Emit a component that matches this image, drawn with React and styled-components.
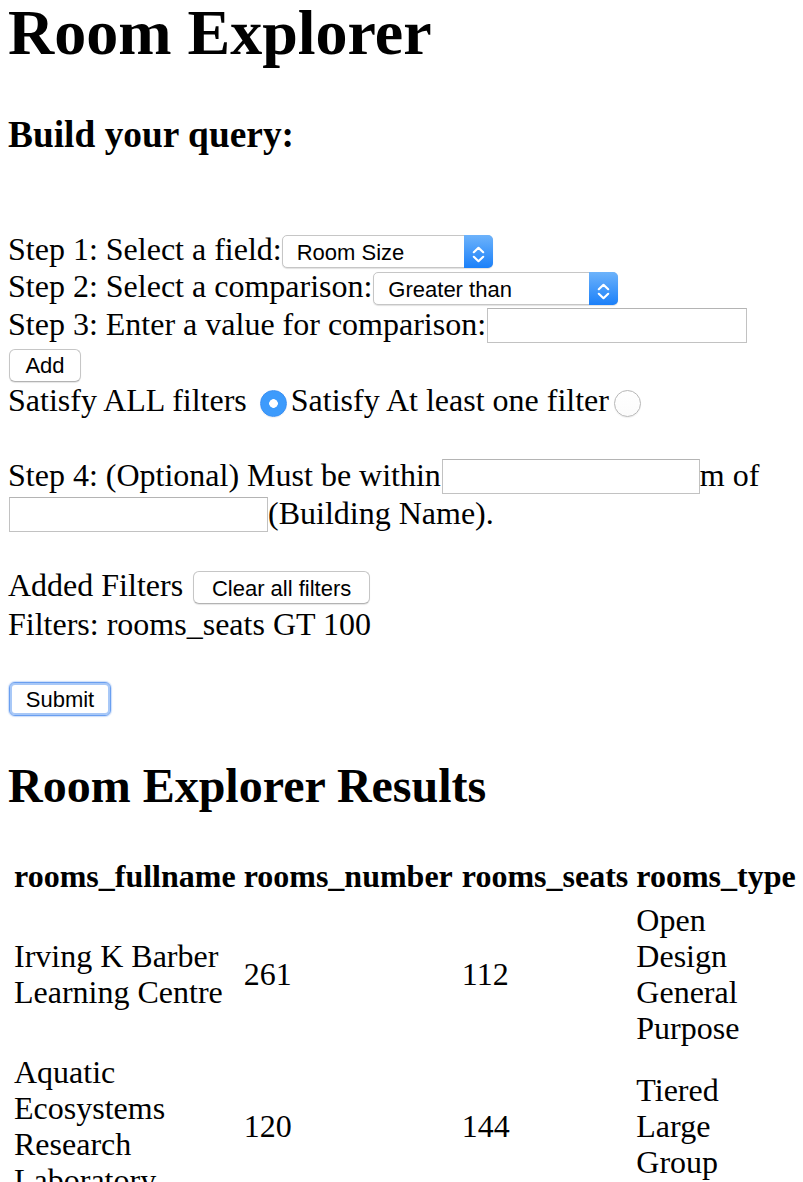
import React from "react";
import styled, { createGlobalStyle } from "styled-components";

const GlobalStyle = createGlobalStyle`
  html { overflow: hidden; }
  body {
    margin: 0;
    background: #ffffff;
    color: #000000;
    font-family: "Liberation Serif", "Times New Roman", Times, serif;
  }
`;

const Page = styled.div`
  padding: 1px 8px 0;
  font-size: 32px;
`;

const Title = styled.h1`
  margin: 0;
  font-size: 64px;
  line-height: 64px;
  font-weight: bold;
`;

const SubTitle = styled.h3`
  margin: 47.6px 0 0;
  font-size: 37.4px;
  line-height: 43px;
  font-weight: bold;
`;

const Form = styled.form`
  display: flex;
  flex-direction: column;
  margin-top: 74.6px;
`;

const Line = styled.div`
  display: flex;
  align-items: flex-end;
  height: ${(p) => p.$h ?? 37.5}px;
  margin-top: ${(p) => p.$gap ?? 0}px;
`;

const Text = styled.span`
  line-height: 37px;
  white-space: pre;
`;

const SelectWrap = styled.span`
  position: relative;
  display: flex;
  flex-shrink: 0;
  width: ${(p) => p.$w}px;
  height: 33px;
  margin-left: ${(p) => p.$ml ?? 1}px;
`;

const NativeSelect = styled.select`
  appearance: none;
  -webkit-appearance: none;
  display: block;
  box-sizing: border-box;
  width: 100%;
  height: 100%;
  margin: 0;
  padding: 2px 34px 0 14px;
  border: 1px solid #c6c6c6;
  border-radius: 5px;
  background: #ffffff;
  box-shadow: 0 1px 1px rgba(0, 0, 0, 0.12);
  font-family: "Liberation Sans", Arial, sans-serif;
  font-size: 22px;
  color: #000;
  outline: none;
`;

const Stepper = styled.span`
  position: absolute;
  top: 0;
  right: 0;
  bottom: 0;
  width: 29px;
  border-radius: 0 5px 5px 0;
  background: linear-gradient(#6db3fb, #1b80f9);
  pointer-events: none;
  display: flex;
`;

const TextInput = styled.input`
  box-sizing: border-box;
  flex-shrink: 0;
  width: ${(p) => p.$w ?? 259}px;
  height: 35px;
  margin: 0 0 0 1px;
  padding: 0 4px;
  border: 1px solid #c2c2c2;
  border-top-color: #b4b4b4;
  border-radius: 0;
  background: #fff;
  font-family: "Liberation Sans", Arial, sans-serif;
  font-size: 22px;
  outline: none;
`;

const Button = styled.button`
  box-sizing: border-box;
  flex-shrink: 0;
  width: ${(p) => p.$w}px;
  height: ${(p) => (p.$focused ? 34 : 33)}px;
  margin: 0 0 0 ${(p) => p.$ml ?? 1}px;
  padding: 2px 0 0;
  border: 1px solid ${(p) => (p.$focused ? "#6a9ff0" : "#c6c6c6")};
  border-bottom-color: ${(p) => (p.$focused ? "#6a9ff0" : "#b3b3b3")};
  border-radius: 6px;
  background: #ffffff;
  box-shadow: ${(p) =>
    p.$focused
      ? "inset 0 0 0 2px #a8c8f7, 0 0 1px 1px rgba(110,160,240,0.35)"
      : "0 1px 1px rgba(0, 0, 0, 0.1)"};
  font-family: "Liberation Sans", Arial, sans-serif;
  font-size: 22px;
  color: #000;
  cursor: pointer;
`;

const Radio = styled.input.attrs({ type: "radio" })`
  appearance: none;
  -webkit-appearance: none;
  box-sizing: border-box;
  flex-shrink: 0;
  width: 27px;
  height: 27px;
  margin: 0 4px 2.5px 5px;
  border-radius: 50%;
  border: 1px solid #b7b7b7;
  background: linear-gradient(#ffffff, #fbfbfb);
  box-shadow: 0 1px 1px rgba(0, 0, 0, 0.06);
  outline: none;

  &:checked {
    border-color: #3a8ff2;
    background: radial-gradient(circle at center, #ffffff 0 4px, #3d9bfc 4.6px);
  }
`;

const ResultsTitle = styled.h2`
  margin: 41.9px 0 0;
  font-size: 48px;
  line-height: 55.2px;
  font-weight: bold;
`;

const Table = styled.table`
  margin-top: 39.1px;
  width: min-content;
  border-spacing: 4px;
  font-size: 32px;
  line-height: 36px;
`;

const Th = styled.th`
  padding: 2px ${(p) => (p.$wide ? 3 : 2)}px 2px 2px;
  font-weight: bold;
  white-space: nowrap;
  text-align: left;
`;

const Td = styled.td`
  padding: 2px;
  vertical-align: middle;
  text-align: left;
`;

function Chevrons() {
  return (
    <svg width="29" height="33" viewBox="0 0 29 33" fill="none">
      <path
        d="M9.8 17.2 L14.5 12.8 L19.2 17.2"
        stroke="#fff"
        strokeWidth="2.2"
        strokeLinecap="round"
        strokeLinejoin="round"
      />
      <path
        d="M9.8 21.8 L14.5 26.2 L19.2 21.8"
        stroke="#fff"
        strokeWidth="2.2"
        strokeLinecap="round"
        strokeLinejoin="round"
      />
    </svg>
  );
}

function Select({ width, options, value, ml }) {
  return (
    <SelectWrap $w={width} $ml={ml}>
      <NativeSelect defaultValue={value}>
        {options.map((o) => (
          <option key={o} value={o}>
            {o}
          </option>
        ))}
      </NativeSelect>
      <Stepper>
        <Chevrons />
      </Stepper>
    </SelectWrap>
  );
}

const rows = [
  ["Irving K Barber Learning Centre", "261", "112", "Open Design General Purpose"],
  ["Aquatic Ecosystems Research Laboratory", "120", "144", "Tiered Large Group"],
  ["Buchanan", "A101", "181", "Tiered Large Group"],
  ["Chemistry", "B150", "265", "Tiered Large Group"],
];

export default function App() {
  return (
    <>
      <GlobalStyle />
      <Page>
        <Title>Room Explorer</Title>
        <SubTitle>Build your query:</SubTitle>
        <Form onSubmit={(e) => e.preventDefault()}>
          <Line>
            <Text>Step 1: Select a field:</Text>
            <Select
              width={211}
              ml={0}
              value="Room Size"
              options={["Room Size", "Room Number", "Room Type", "Furniture"]}
            />
          </Line>
          <Line>
            <Text>Step 2: Select a comparison:</Text>
            <Select
              width={245}
              ml={1}
              value="Greater than"
              options={["Greater than", "Less than", "Equal to"]}
            />
          </Line>
          <Line>
            <Text>Step 3: Enter a value for comparison:</Text>
            <TextInput type="text" $w={260} />
          </Line>
          <Line $h={39}>
            <Button type="button" $w={72}>
              Add
            </Button>
          </Line>
          <Line>
            <Text>Satisfy ALL filters </Text>
            <Radio name="mode" defaultChecked />
            <Text>Satisfy At least one filter</Text>
            <Radio name="mode" />
          </Line>
          <Line $gap={37.5}>
            <Text>Step 4: (Optional) Must be within</Text>
            <TextInput type="text" $w={258} />
            <Text>m of</Text>
          </Line>
          <Line>
            <TextInput type="text" $w={259} />
            <Text>(Building Name).</Text>
          </Line>
          <Line $gap={35.3}>
            <Text>Added Filters </Text>
            <Button type="button" $w={177} $ml={2}>
              Clear all filters
            </Button>
          </Line>
          <Line $h={38.2}>
            <Text>Filters: rooms_seats GT 100</Text>
          </Line>
          <Line $gap={35.8}>
            <Button type="submit" $w={102} $focused>
              Submit
            </Button>
          </Line>
        </Form>
        <ResultsTitle>Room Explorer Results</ResultsTitle>
        <Table>
          <thead>
            <tr>
              <Th>rooms_fullname</Th>
              <Th $wide>rooms_number</Th>
              <Th>rooms_seats</Th>
              <Th>rooms_type</Th>
            </tr>
          </thead>
          <tbody>
            {rows.map((r) => (
              <tr key={r[0] + r[1]}>
                {r.map((c, i) => (
                  <Td key={i}>{c}</Td>
                ))}
              </tr>
            ))}
          </tbody>
        </Table>
      </Page>
    </>
  );
}
